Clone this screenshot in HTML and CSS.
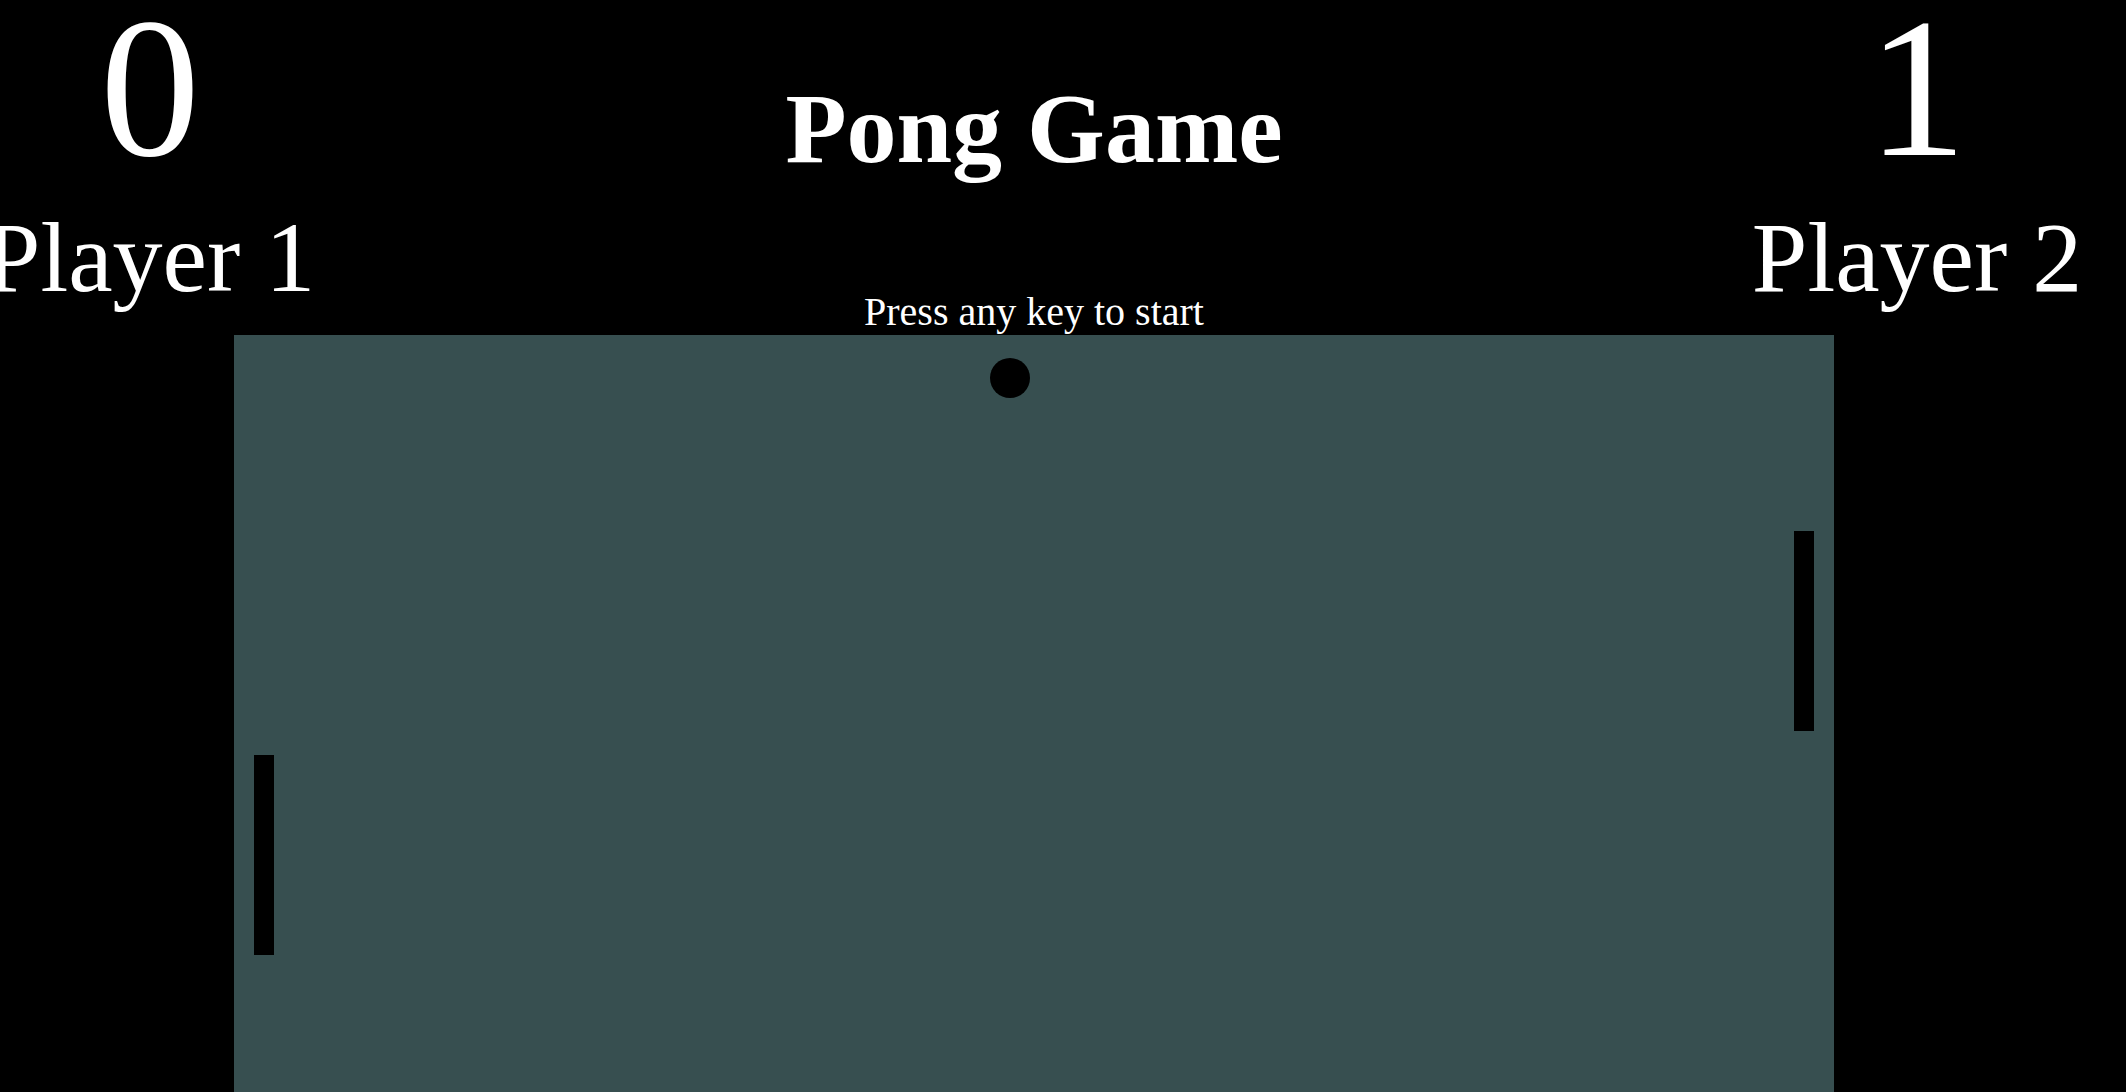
FILE: index.html
```html
<!DOCTYPE html>
<html lang="en">
<head>
<meta charset="utf-8">
<title>Pong Game</title>
<link rel="stylesheet" href="styles.css">
</head>
<body>
  <header class="header">
    <div class="player player-left">
      <div class="score">0</div>
      <div class="label">Player 1</div>
    </div>
    <div class="center">
      <h1 class="title">Pong Game</h1>
      <p class="hint">Press any key to start</p>
    </div>
    <div class="player player-right">
      <div class="score">1</div>
      <div class="label">Player 2</div>
    </div>
  </header>
  <main class="board">
    <div class="ball" style="left:756px; top:23px"></div>
    <div class="paddle" style="left:20px; top:420px"></div>
    <div class="paddle" style="left:1560px; top:196px"></div>
  </main>
</body>
</html>
```
FILE: styles.css
```css
html, body {
  margin: 0;
  padding: 0;
  background: #000;
  overflow: hidden;
}
body {
  font-family: "Liberation Serif", "Times New Roman", serif;
  color: #fff;
}
.header {
  display: flex;
  height: 335px;
}
.player {
  display: flex;
  flex-direction: column;
  align-items: center;
  gap: 29px;
}
.player-left {
  width: 300px;
}
.player-right {
  width: 298px;
}
.score {
  font-size: 200px;
  line-height: 176px;
}
.label {
  font-size: 100px;
  line-height: 106px;
  white-space: nowrap;
}
.center {
  width: 1468px;
  display: flex;
  flex-direction: column;
  align-items: center;
  padding-top: 69px;
}
.title {
  margin: 0;
  font-size: 100px;
  line-height: 120px;
  font-weight: bold;
  white-space: nowrap;
}
.hint {
  margin: 100px 0 0;
  font-size: 40px;
  line-height: 45px;
  white-space: nowrap;
}
.board {
  position: relative;
  margin-left: 234px;
  width: 1600px;
  height: 800px;
  background: #374f50;
}
.paddle {
  position: absolute;
  width: 20px;
  height: 200px;
  background: #000;
}
.ball {
  position: absolute;
  width: 40px;
  height: 40px;
  border-radius: 50%;
  background: #000;
}
```
